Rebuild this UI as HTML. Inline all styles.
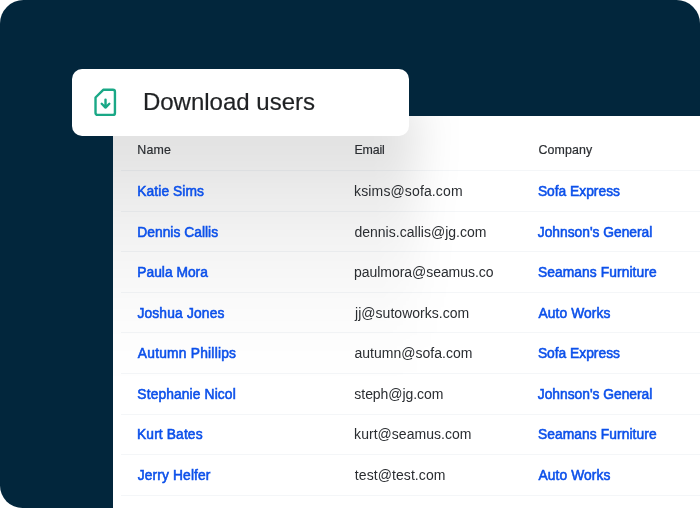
<!DOCTYPE html>
<html>
<head>
<meta charset="utf-8">
<title>Download users</title>
<style>
  html, body { margin: 0; padding: 0; background: #ffffff; }
  body { width: 700px; height: 508px; overflow: hidden; font-family: "Liberation Sans", sans-serif; }
  .stage { will-change: transform; position: absolute; left: 0; top: 0; width: 700px; height: 508px; background: #02263c; border-radius: 23.5px 23.5px 0 22.5px; overflow: hidden; }
  .table { position: absolute; left: 113px; top: 115.6px; width: 587px; height: 393px; background: #ffffff; overflow: hidden; }
  .sep { position: absolute; left: 121px; width: 579px; height: 1px; background: rgba(10,40,90,0.045); }
  .btn { position: absolute; left: 72px; top: 69px; width: 337px; height: 67px; background: #fff; border-radius: 10px; }
  .shadow { position: absolute; left: -73px; top: -11.6px; width: 377px; height: 300px; filter: blur(22px);
     background: linear-gradient(to bottom, rgba(0,0,0,0.135) 0px, rgba(0,0,0,0.113) 40px, rgba(0,0,0,0.078) 86px, rgba(0,0,0,0.052) 127px, rgba(0,0,0,0.03) 168px, rgba(0,0,0,0.014) 208px, rgba(0,0,0,0.004) 249px, rgba(0,0,0,0) 285px); }
  .btn svg { position: absolute; left: 19px; top: 16px; }
  span { position: absolute; white-space: nowrap; line-height: 20px; }
  .h { font-size: 12.4px; color: #2b2e32; -webkit-text-stroke: 0.2px #2b2e32; }
  .n, .c { font-size: 13.8px; color: #0c50ea; -webkit-text-stroke: 0.55px #0c50ea; }
  .e { font-size: 14px; color: #2a2d31; }
  .t { font-size: 24px; color: #1f2123; -webkit-text-stroke: 0.2px #1f2123; }
</style>
</head>
<body>
<div class="stage">
  <div class="table"><div class="shadow"></div></div>
  <div class="btn">
    <svg width="30" height="36" viewBox="0 0 30 36" fill="none" stroke="#1aa886" stroke-width="2.4" stroke-linecap="round" stroke-linejoin="round">
      <g transform="translate(0.27 0.2)">
      <path d="M11.95 4.6 H21.67 A2 2 0 0 1 23.67 6.6 V27.7 A2 2 0 0 1 21.67 29.7 H6.25 A2 2 0 0 1 4.25 27.7 V12.3 Z"/>
      <path d="M14.25 14.4 V22.3 M10.45 18.55 L14.25 22.35 L18.05 18.55"/>
      </g>
    </svg>
  </div>

  <div class="sep" style="top:170px"></div>
  <div class="sep" style="top:211px"></div>
  <div class="sep" style="top:251px"></div>
  <div class="sep" style="top:292px"></div>
  <div class="sep" style="top:332px"></div>
  <div class="sep" style="top:373px"></div>
  <div class="sep" style="top:414px"></div>
  <div class="sep" style="top:454px"></div>
  <div class="sep" style="top:495px"></div>
  <span id="t" class="t" style="left:142.95px;top:91.50px;letter-spacing:-0.004px;">Download users</span>
  <span id="hName" class="h" style="left:137.34px;top:140.00px;letter-spacing:0.175px;">Name</span>
  <span id="hEmail" class="h" style="left:354.48px;top:140.00px;letter-spacing:-0.146px;">Email</span>
  <span id="hCompany" class="h" style="left:538.44px;top:140.00px;letter-spacing:0.127px;">Company</span>
  <span id="n0" class="n" style="left:137.32px;top:181.50px;letter-spacing:0.073px;">Katie Sims</span>
  <span id="e0" class="e" style="left:354.12px;top:181.00px;letter-spacing:0.128px;">ksims@sofa.com</span>
  <span id="c0" class="c" style="left:537.89px;top:181.50px;letter-spacing:0.001px;">Sofa Express</span>
  <span id="n1" class="n" style="left:137.28px;top:222.50px;letter-spacing:0.024px;">Dennis Callis</span>
  <span id="e1" class="e" style="left:354.40px;top:222.00px;letter-spacing:0.022px;">dennis.callis@jg.com</span>
  <span id="c1" class="c" style="left:537.82px;top:222.50px;letter-spacing:-0.006px;">Johnson's General</span>
  <span id="n2" class="n" style="left:137.28px;top:262.50px;letter-spacing:0.009px;">Paula Mora</span>
  <span id="e2" class="e" style="left:354.07px;top:262.00px;letter-spacing:-0.050px;">paulmora@seamus.co</span>
  <span id="c2" class="c" style="left:537.89px;top:262.50px;letter-spacing:0.086px;">Seamans Furniture</span>
  <span id="n3" class="n" style="left:137.39px;top:303.50px;letter-spacing:0.173px;">Joshua Jones</span>
  <span id="e3" class="e" style="left:355.08px;top:303.00px;letter-spacing:0.026px;">jj@sutoworks.com</span>
  <span id="c3" class="c" style="left:538.54px;top:303.50px;letter-spacing:0.079px;">Auto Works</span>
  <span id="n4" class="n" style="left:137.84px;top:343.50px;letter-spacing:0.221px;">Autumn Phillips</span>
  <span id="e4" class="e" style="left:354.42px;top:343.00px;letter-spacing:0.024px;">autumn@sofa.com</span>
  <span id="c4" class="c" style="left:537.89px;top:343.50px;letter-spacing:0.001px;">Sofa Express</span>
  <span id="n5" class="n" style="left:137.36px;top:384.50px;letter-spacing:0.121px;">Stephanie Nicol</span>
  <span id="e5" class="e" style="left:354.36px;top:384.00px;letter-spacing:-0.057px;">steph@jg.com</span>
  <span id="c5" class="c" style="left:537.82px;top:384.50px;letter-spacing:-0.006px;">Johnson's General</span>
  <span id="n6" class="n" style="left:137.06px;top:424.50px;letter-spacing:0.118px;">Kurt Bates</span>
  <span id="e6" class="e" style="left:354.12px;top:424.00px;letter-spacing:0.029px;">kurt@seamus.com</span>
  <span id="c6" class="c" style="left:537.89px;top:424.50px;letter-spacing:0.086px;">Seamans Furniture</span>
  <span id="n7" class="n" style="left:137.72px;top:465.50px;letter-spacing:0.131px;">Jerry Helfer</span>
  <span id="e7" class="e" style="left:354.80px;top:465.00px;letter-spacing:0.079px;">test@test.com</span>
  <span id="c7" class="c" style="left:538.54px;top:465.50px;letter-spacing:0.079px;">Auto Works</span>
</div>
</body>
</html>
